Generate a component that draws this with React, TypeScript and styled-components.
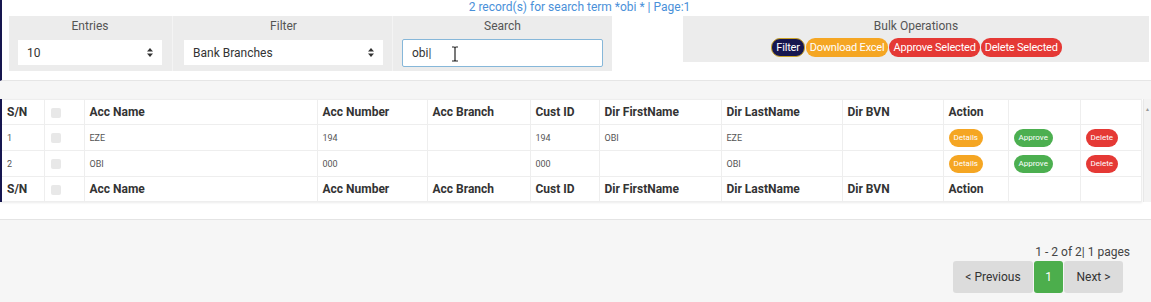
import React from 'react';
import styled, {createGlobalStyle} from 'styled-components';

const GlobalStyle = createGlobalStyle`
    body {
        margin: 0;
        background: #f6f6f6;
        font-family: Roboto, "Liberation Sans", Arial, sans-serif;
    }
`

const navy = '#16164f'

type Row = {sn: number, accName: string, accNumber: string, branch: string, custId: string, first: string, last: string, bvn: string}

const rows: Row[] = [
    {sn: 1, accName: 'EZE', accNumber: '194', branch: '', custId: '194', first: 'OBI', last: 'EZE', bvn: ''},
    {sn: 2, accName: 'OBI', accNumber: '000', branch: '', custId: '000', first: '', last: 'OBI', bvn: ''},
]

const columns = ['S/N', '', 'Acc Name', 'Acc Number', 'Acc Branch', 'Cust ID', 'Dir FirstName', 'Dir LastName', 'Dir BVN', 'Action', '', '']
const widths = [43, 40, 233, 110, 103, 69, 122, 121, 101, 65, 72, 61]

const SortArrows = () => (
    <svg width="6" height="9" viewBox="0 0 6 9">
        <path d="M3 0 L6 3.5 L0 3.5 Z" fill="#333"/>
        <path d="M3 9 L6 5.5 L0 5.5 Z" fill="#333"/>
    </svg>
)

const IBeam = () => (
    <svg width="8" height="16" viewBox="0 0 8 16">
        <path d="M1 1 H3 Q4 1 4 2.5 V13.5 Q4 15 3 15 H1 M7 1 H5 Q4 1 4 2.5 M4 13.5 Q4 15 5 15 H7" stroke="#222" strokeWidth="1.2" fill="none"/>
    </svg>
)

export default function App() {
    return (
        <>
            <GlobalStyle/>
            <TopPanel>
                <RecordInfo>2 record(s) for search term *obi * | Page:1</RecordInfo>
                <TopRow>
                    <FilterBar>
                        <FilterCell $width={163} $padL={9} $padR={10}>
                            <CellLabel>Entries</CellLabel>
                            <FakeSelect>
                                <span>10</span>
                                <SortArrows/>
                            </FakeSelect>
                        </FilterCell>
                        <FilterCell $width={220} $padL={11} $padR={9} $divider>
                            <CellLabel>Filter</CellLabel>
                            <FakeSelect>
                                <span>Bank Branches</span>
                                <SortArrows/>
                            </FakeSelect>
                        </FilterCell>
                        <FilterCell $width={220} $padL={9} $padR={9} $divider>
                            <CellLabel>Search</CellLabel>
                            <SearchBox>
                                <span>obi|</span>
                                <IBeamWrap><IBeam/></IBeamWrap>
                            </SearchBox>
                        </FilterCell>
                    </FilterBar>
                    <BulkBox>
                        <CellLabel>Bulk Operations</CellLabel>
                        <BulkButtons>
                            <PillButton $bg={navy} $border="#c9a227">Filter</PillButton>
                            <PillButton $bg="#f5a623">Download Excel</PillButton>
                            <PillButton $bg="#e53935">Approve Selected</PillButton>
                            <PillButton $bg="#e53935">Delete Selected</PillButton>
                        </BulkButtons>
                    </BulkBox>
                </TopRow>
            </TopPanel>

            <TablePanel>
                <TableArea>
                    <Table>
                        <colgroup>
                            {widths.map((w, i) => <col key={i} style={{width: w}}/>)}
                        </colgroup>
                        <thead>
                        <tr>
                            {columns.map((c, i) => (
                                <HeadCell key={i}>{i === 1 ? <CheckBox/> : c}</HeadCell>
                            ))}
                        </tr>
                        </thead>
                        <tbody>
                        {rows.map(r => (
                            <tr key={r.sn}>
                                <BodyCell>{r.sn}</BodyCell>
                                <BodyCell><CheckBox/></BodyCell>
                                <BodyCell>{r.accName}</BodyCell>
                                <BodyCell>{r.accNumber}</BodyCell>
                                <BodyCell>{r.branch}</BodyCell>
                                <BodyCell>{r.custId}</BodyCell>
                                <BodyCell>{r.first}</BodyCell>
                                <BodyCell>{r.last}</BodyCell>
                                <BodyCell>{r.bvn}</BodyCell>
                                <BodyCell><SmallButton $bg="#f5a623">Details</SmallButton></BodyCell>
                                <BodyCell><SmallButton $bg="#4caf50">Approve</SmallButton></BodyCell>
                                <BodyCell><SmallButton $bg="#e53935">Delete</SmallButton></BodyCell>
                            </tr>
                        ))}
                        </tbody>
                        <tfoot>
                        <tr>
                            {columns.map((c, i) => (
                                <HeadCell key={i}>{i === 1 ? <CheckBox/> : c}</HeadCell>
                            ))}
                        </tr>
                        </tfoot>
                    </Table>
                </TableArea>
                <ScrollTrack><ScrollArrow>▲</ScrollArrow></ScrollTrack>
            </TablePanel>

            <Pager>
                <PageInfo>1 - 2 of 2| 1 pages</PageInfo>
                <PageButtons>
                    <PageButton $width={80}>&lt; Previous</PageButton>
                    <PageButton $width={29} $active>1</PageButton>
                    <PageButton $width={59}>Next &gt;</PageButton>
                </PageButtons>
            </Pager>
        </>
    );
}

const TopPanel = styled.div`
    background: #fff;
    border-left: 2px solid ${navy};
    height: 81px;
    border-bottom: 1px solid #e6e6e6;
    box-sizing: border-box;
`

const RecordInfo = styled.div`
    height: 16px;
    text-align: center;
    font-size: 12px;
    line-height: 14px;
    color: #4a90d9;
    padding-left: 6px;
`

const TopRow = styled.div`
    display: flex;
    align-items: flex-start;
    padding-left: 7px;
    gap: 71px;
`

const FilterBar = styled.div`
    display: flex;
    background: #ececec;
    height: 55px;
`

const FilterCell = styled.div<{ $width: number, $padL: number, $padR: number, $divider?: boolean }>`
    width: ${p => p.$width}px;
    padding: 2px ${p => p.$padR}px 0 ${p => p.$padL}px;
    box-sizing: border-box;
    display: flex;
    flex-direction: column;
    border-left: ${p => p.$divider ? '1px solid #f4f4f4' : 'none'};
`

const CellLabel = styled.div`
    text-align: center;
    font-size: 12px;
    line-height: 16px;
    color: #555;
    margin-bottom: 5px;
`

const FakeSelect = styled.div`
    background: #fff;
    height: 25px;
    display: flex;
    align-items: center;
    justify-content: space-between;
    padding: 0 9px 0 9px;
    font-size: 12px;
    color: #333;
    margin-top: 1px;
`

const SearchBox = styled.div`
    background: #fff;
    height: 28px;
    box-sizing: border-box;
    border: 1px solid #86b7d9;
    border-radius: 2px;
    display: flex;
    align-items: center;
    padding-left: 9px;
    font-size: 12px;
    color: #333;
`

const IBeamWrap = styled.span`
    display: flex;
    margin-left: 20px;
    margin-top: 2px;
`

const BulkBox = styled.div`
    flex: 1;
    margin-right: 2px;
    background: #ececec;
    height: 46px;
    padding-top: 2px;
    box-sizing: border-box;
`

const BulkButtons = styled.div`
    display: flex;
    justify-content: center;
    gap: 1px;
    margin-top: -1px;
    padding-left: 1px;
`

const PillButton = styled.span<{ $bg: string, $border?: string }>`
    background: ${p => p.$bg};
    color: #fff;
    font-size: 11px;
    letter-spacing: -0.2px;
    height: 19px;
    padding: 0 4px;
    border-radius: 9px;
    box-sizing: border-box;
    border: ${p => p.$border ? `1px solid ${p.$border}` : 'none'};
    line-height: ${p => p.$border ? '17px' : '19px'};
`

const TablePanel = styled.div`
    margin-top: 18px;
    background: #fff;
    display: flex;
    padding-bottom: 17px;
    border-bottom: 1px solid #e4e4e4;
`

const TableArea = styled.div`
    width: 1140px;
`

const Table = styled.table`
    border-collapse: collapse;
    table-layout: fixed;
    width: 1140px;
    border-left: 2px solid ${navy};
    box-shadow: 0 1px 2px rgba(0, 0, 0, 0.08);
`

const HeadCell = styled.th`
    height: 24px;
    padding: 0 0 0 5px;
    text-align: left;
    font-size: 12px;
    font-weight: bold;
    color: #333;
    border: 1px solid #eee;
`

const BodyCell = styled.td`
    height: 25px;
    padding: 0 0 0 5px;
    font-size: 9px;
    color: #555;
    border: 1px solid #eee;
`

const CheckBox = styled.span`
    display: inline-block;
    width: 10px;
    height: 10px;
    border-radius: 2px;
    background: #e8e8e8;
    margin-left: 1px;
    vertical-align: middle;
`

const SmallButton = styled.span<{ $bg: string }>`
    display: inline-block;
    background: ${p => p.$bg};
    color: #fff;
    font-size: 8px;
    height: 18px;
    line-height: 18px;
    padding: 0 5px;
    border-radius: 9px;
    vertical-align: middle;
`

const ScrollTrack = styled.div`
    flex: 1;
    background: #f3f3f3;
    border-left: 1px solid #e8e8e8;
    margin-left: 3px;
    display: flex;
    justify-content: center;
`

const ScrollArrow = styled.span`
    font-size: 5px;
    color: #999;
    margin-top: 7px;
`

const Pager = styled.div`
    display: flex;
    flex-direction: column;
    align-items: flex-end;
    padding: 24px 21px 0 0;
`

const PageInfo = styled.div`
    font-size: 12px;
    color: #444;
    line-height: 16px;
    margin-bottom: 1px;
`

const PageButtons = styled.div`
    display: flex;
    gap: 1px;
    margin-right: 7px;
`

const PageButton = styled.span<{ $width: number, $active?: boolean }>`
    width: ${p => p.$width}px;
    height: 32px;
    display: flex;
    align-items: center;
    justify-content: center;
    border-radius: 3px;
    font-size: 12px;
    background: ${p => p.$active ? '#4cae4c' : '#dcdcdc'};
    color: ${p => p.$active ? '#fff' : '#333'};
`
